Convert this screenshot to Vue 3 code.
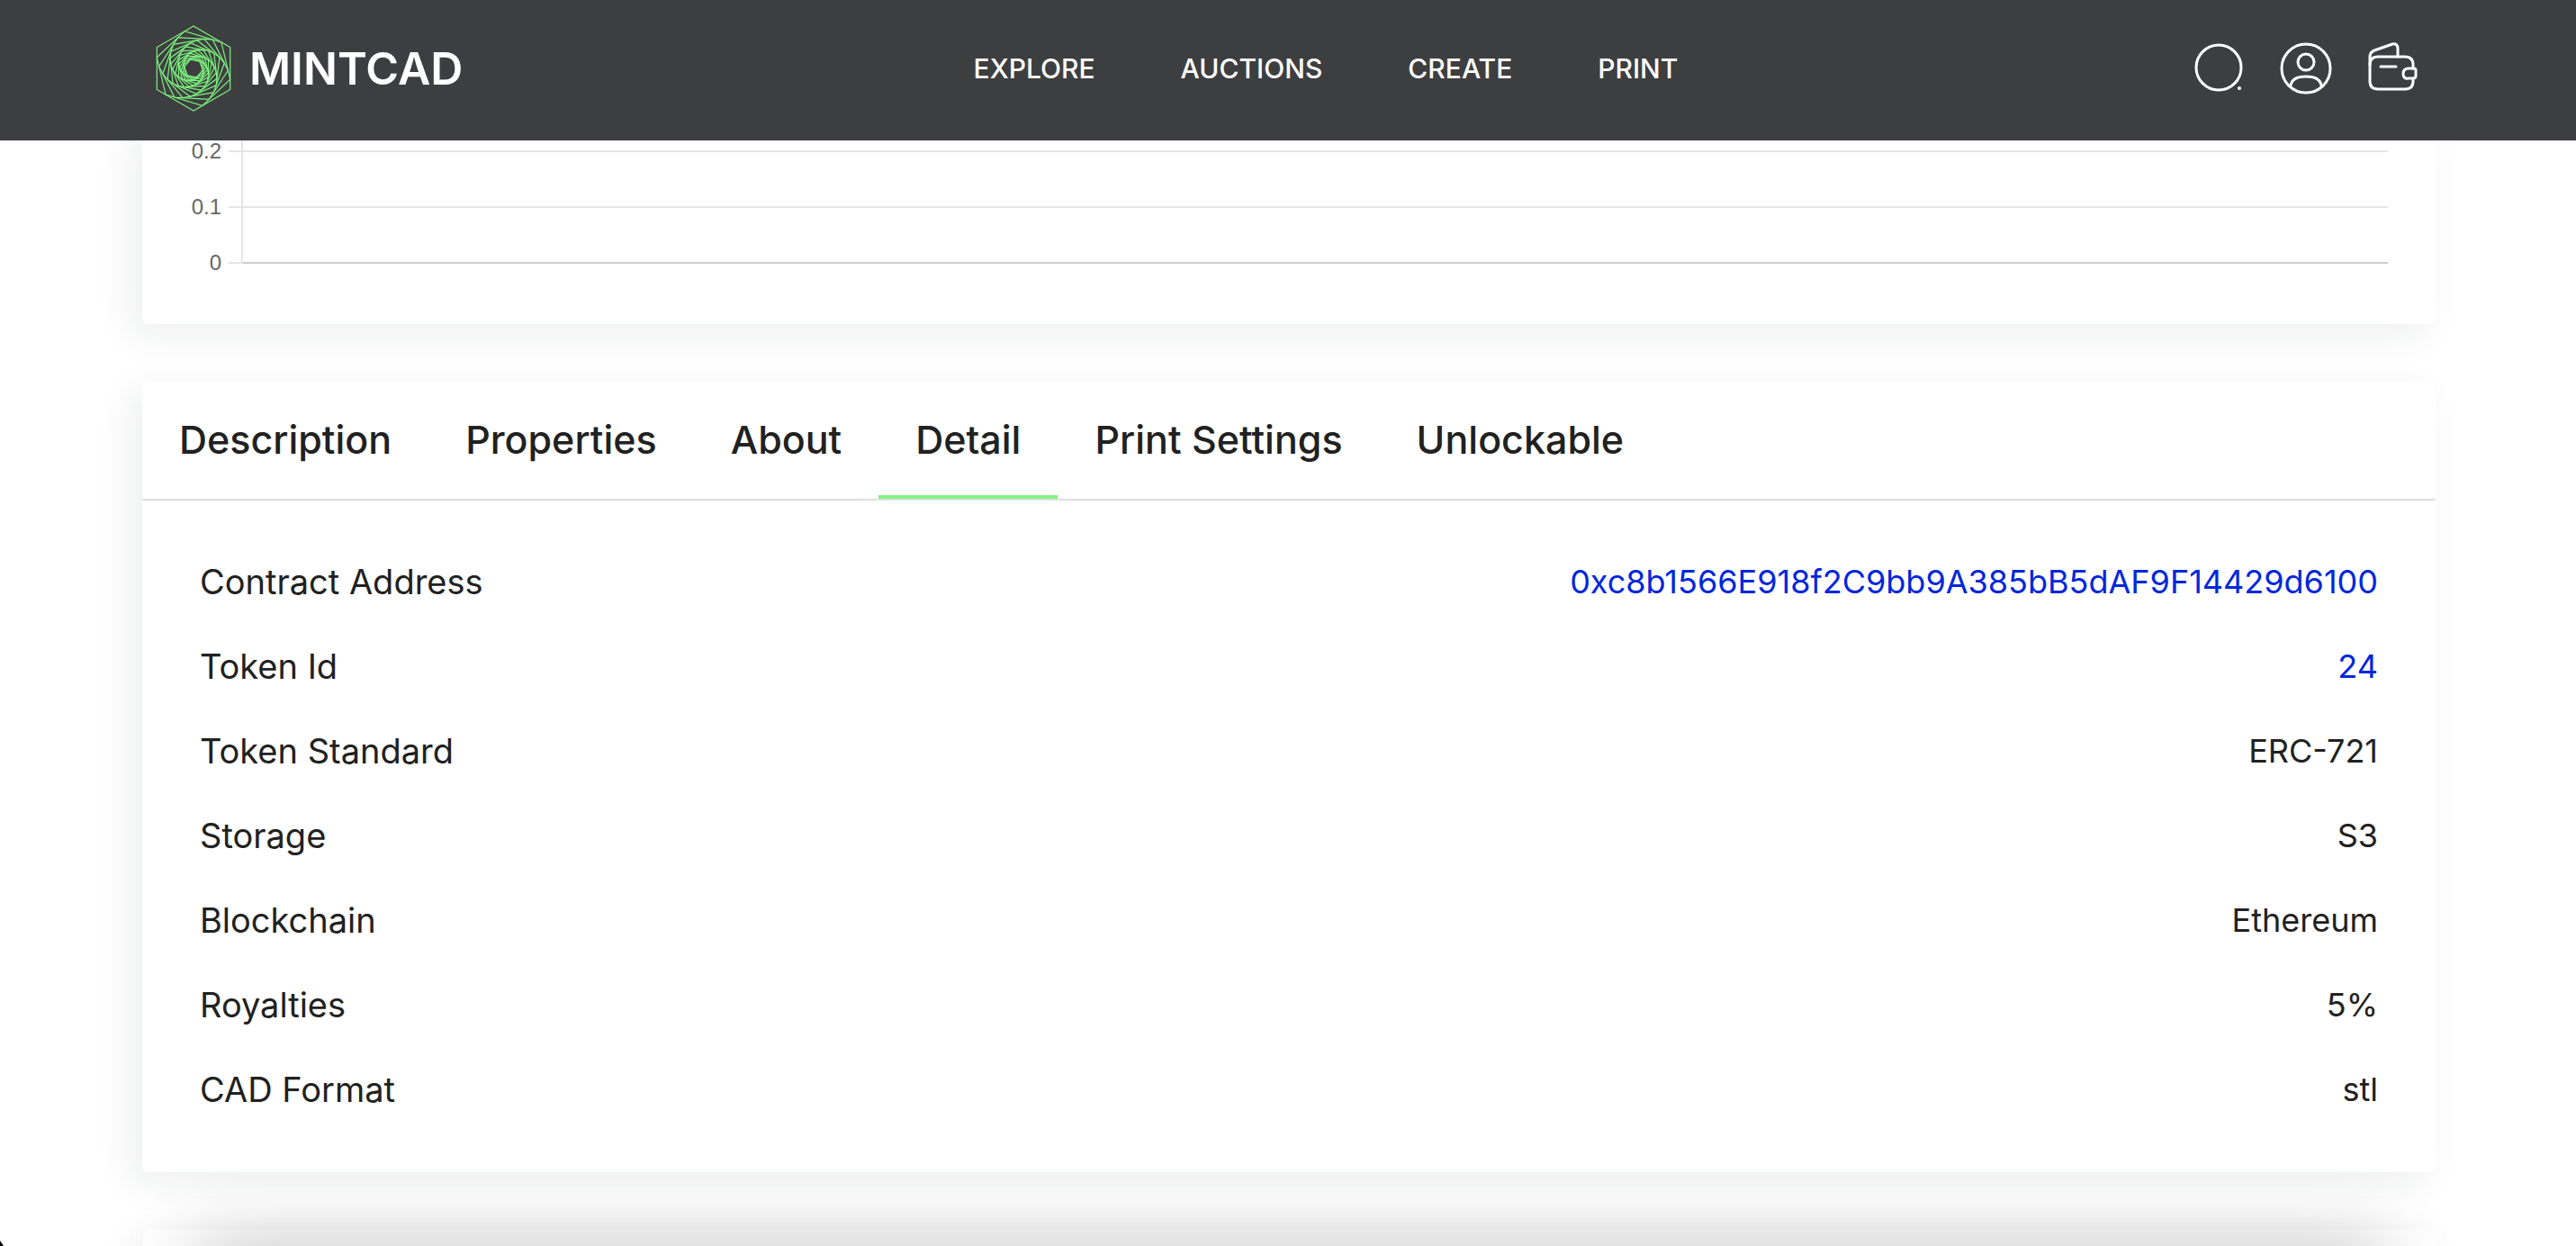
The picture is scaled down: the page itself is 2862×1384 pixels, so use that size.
<script setup>
import { ref } from 'vue'

const navLinks = ['EXPLORE', 'AUCTIONS', 'CREATE', 'PRINT']
const ticks = ['0.2', '0.1', '0']
const tabs = ['Description', 'Properties', 'About', 'Detail', 'Print Settings', 'Unlockable']
const activeTab = ref('Detail')

const details = [
  { label: 'Contract Address', value: '0xc8b1566E918f2C9bb9A385bB5dAF9F14429d6100', link: true },
  { label: 'Token Id', value: '24', link: true },
  { label: 'Token Standard', value: 'ERC-721' },
  { label: 'Storage', value: 'S3' },
  { label: 'Blockchain', value: 'Ethereum' },
  { label: 'Royalties', value: '5%' },
  { label: 'CAD Format', value: 'stl' }
]

// Each hexagon of the logo is inscribed in the previous one.
const hexagons = []
let points = Array.from({ length: 6 }, (_, i) => {
  const angle = -Math.PI / 2 - (i * Math.PI) / 3
  return [42 + 47 * Math.cos(angle), 48 + 47 * Math.sin(angle)]
})
for (let n = 0; n < 16; n++) {
  hexagons.push(points.map((p) => p.map((v) => v.toFixed(2)).join(',')).join(' '))
  points = points.map((p, i) => {
    const next = points[(i + 1) % 6]
    return [p[0] * 0.76 + next[0] * 0.24, p[1] * 0.76 + next[1] * 0.24]
  })
}
</script>

<template>
  <div class="page">
    <header class="header">
      <a class="brand" href="#">
        <svg class="logo" viewBox="0 0 84 96" aria-hidden="true">
          <polygon v-for="hex in hexagons" :key="hex" :points="hex" />
        </svg>
        <span>MINTCAD</span>
      </a>
      <nav class="nav">
        <a v-for="link in navLinks" :key="link" href="#">{{ link }}</a>
      </nav>
      <div class="actions">
        <button type="button" aria-label="Search">
          <svg viewBox="0 0 60 60">
            <circle cx="30" cy="29" r="25" />
            <circle class="dot" cx="53" cy="52" r="2" />
          </svg>
        </button>
        <button type="button" aria-label="Account">
          <svg viewBox="0 0 60 60">
            <circle cx="30" cy="30" r="27" />
            <circle cx="30" cy="23" r="9" />
            <path d="M13 49C14 42 21 39 30 39S46 42 47 49" />
          </svg>
        </button>
        <button type="button" aria-label="Wallet">
          <svg viewBox="0 0 60 60">
            <path d="M52 30V26Q52 17 43 17H13Q4 17 4 26V44Q4 53 13 53H43Q52 53 52 44V41" />
            <path d="M4 26V17Q4 12 9 10L29 3Q35 2 35 8V17" />
            <path d="M16 28H33" />
            <path d="M54 30H47Q41 30 41 36T47 41H52Q55 41 55 38V32Q55 30 53 30" />
          </svg>
        </button>
      </div>
    </header>

    <main class="content">
      <section class="card chart" aria-label="Price history">
        <div v-for="tick in ticks" :key="tick" class="tick">
          <span class="tick-label">{{ tick }}</span>
          <span class="tick-plot"></span>
        </div>
      </section>

      <section class="card">
        <div class="tabs" role="tablist">
          <button
            v-for="tab in tabs"
            :key="tab"
            type="button"
            role="tab"
            :aria-selected="tab === activeTab"
            :class="{ active: tab === activeTab }"
            @click="activeTab = tab"
          >
            {{ tab }}
          </button>
        </div>
        <dl class="details">
          <div v-for="row in details" :key="row.label" class="row">
            <dt>{{ row.label }}</dt>
            <dd>
              <a v-if="row.link" href="#">{{ row.value }}</a>
              <template v-else>{{ row.value }}</template>
            </dd>
          </div>
        </dl>
      </section>

      <section class="card next">
        <div class="panel"></div>
      </section>
    </main>
    <span class="corner"></span>
  </div>
</template>

<style>
body {
  margin: 0;
  background: #fff;
}
</style>

<style scoped>
.page {
  position: relative;
  height: 100vh;
  overflow: hidden;
  font-family: Inter, "Liberation Sans", sans-serif;
  color: #212121;
}
a {
  color: inherit;
  text-decoration: none;
}
button {
  padding: 0;
  border: 0;
  background: none;
  font: inherit;
  color: inherit;
}
.header {
  position: relative;
  z-index: 1;
  display: grid;
  grid-template-columns: 1fr auto 1fr;
  align-items: center;
  height: 156px;
  box-sizing: border-box;
  padding: 0 173px 4px 173px;
  background: #3d3e40;
  color: #fff;
}
.brand {
  display: flex;
  align-items: center;
  gap: 20px;
  font-size: 50px;
  font-weight: 600;
}
.logo {
  width: 84px;
  height: 96px;
  fill: none;
  stroke: #7cf27e;
  stroke-width: 1.2;
}
.nav {
  display: flex;
  gap: 95px;
  margin-left: 84px;
  font-size: 30px;
  font-weight: 500;
}
.actions {
  display: flex;
  justify-content: flex-end;
  gap: 37px;
}
.actions button {
  width: 60px;
  height: 60px;
}
.actions svg {
  display: block;
  fill: none;
  stroke: #fff;
  stroke-width: 3;
  stroke-linecap: round;
  stroke-linejoin: round;
}
.actions .dot {
  fill: #fff;
  stroke: none;
}
.content {
  display: flex;
  flex-direction: column;
  gap: 64px;
  margin-top: -19px;
  padding: 0 156px 0 158px;
}
.card {
  border-radius: 8px;
  background: #fff;
  box-shadow: -12px 12px 40px rgba(25, 50, 40, 0.08);
}
.chart {
  padding: 0 53px 37px 0;
}
.tick {
  display: flex;
  align-items: center;
  gap: 8px;
  height: 62px;
}
.tick-label {
  width: 88px;
  text-align: right;
  font: 24px "Liberation Sans", Arial, sans-serif;
  color: #666;
}
.tick-plot {
  position: relative;
  flex: 1;
  height: 2px;
  background: #e5e5e5;
}
.tick-plot::before {
  content: "";
  position: absolute;
  left: 14px;
  bottom: 0;
  width: 2px;
  height: 62px;
  background: #e5e5e5;
}
.tick:last-child .tick-plot {
  background: linear-gradient(90deg, #e5e5e5 14px, #ccc 14px);
}
.tabs {
  display: flex;
  border-bottom: 2px solid #dfdfdf;
}
.tabs button {
  height: 130px;
  box-sizing: border-box;
  padding: 2px 41px 0;
  border-bottom: 4px solid transparent;
  font-size: 43px;
  font-weight: 500;
}
.tabs .active {
  border-bottom-color: #85f285;
}
.details {
  margin: 0;
  padding: 43px 64px 45px;
}
.row {
  display: flex;
  align-items: center;
  justify-content: space-between;
  height: 94px;
  font-size: 36px;
}
.row dt {
  font-size: 38px;
}
.row dd {
  margin: 0;
}
.row a {
  color: #0027db;
}
.next {
  padding: 18px 60px;
}
.panel {
  height: 400px;
  box-shadow: 0 0 80px rgba(0, 0, 0, 0.24);
}
.corner {
  position: absolute;
  left: 0;
  bottom: 0;
  width: 4px;
  height: 6px;
  background: #000;
  clip-path: polygon(0 0, 100% 100%, 0 100%);
}
</style>
